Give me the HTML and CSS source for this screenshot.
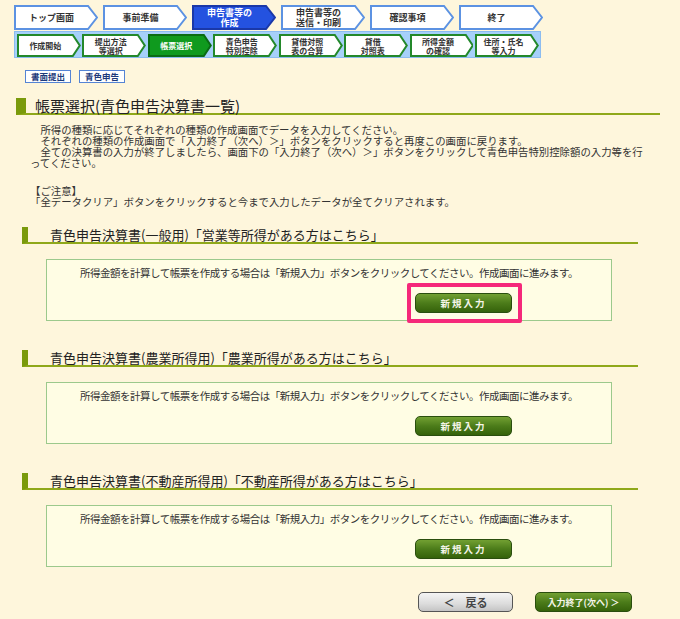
FILE: index.html
```html
<!DOCTYPE html>
<html lang="ja">
<head>
    <meta charset="UTF-8">
    <title>帳票選択(青色申告決算書一覧)</title>
    <link rel="stylesheet" href="styles.css">
</head>
<body>
    <div class="page">
        <!-- 大きいステップ -->
        <div class="steps-main">
            <div class="step">
                <svg class="step-bg" viewBox="0 0 84 25" preserveAspectRatio="none"><polygon points="1,1 74,1 83,12.5 74,24 1,24"/></svg>
                <span class="step-label">トップ画面</span>
            </div>
            <div class="step">
                <svg class="step-bg" viewBox="0 0 84 25" preserveAspectRatio="none"><polygon points="1,1 74,1 83,12.5 74,24 1,24"/></svg>
                <span class="step-label">事前準備</span>
            </div>
            <div class="step active">
                <svg class="step-bg" viewBox="0 0 84 25" preserveAspectRatio="none"><polygon points="1,1 74,1 83,12.5 74,24 1,24"/></svg>
                <span class="step-label">申告書等の<br>作成</span>
            </div>
            <div class="step">
                <svg class="step-bg" viewBox="0 0 84 25" preserveAspectRatio="none"><polygon points="1,1 74,1 83,12.5 74,24 1,24"/></svg>
                <span class="step-label">申告書等の<br>送信・印刷</span>
            </div>
            <div class="step">
                <svg class="step-bg" viewBox="0 0 84 25" preserveAspectRatio="none"><polygon points="1,1 74,1 83,12.5 74,24 1,24"/></svg>
                <span class="step-label">確認事項</span>
            </div>
            <div class="step">
                <svg class="step-bg" viewBox="0 0 84 25" preserveAspectRatio="none"><polygon points="1,1 74,1 83,12.5 74,24 1,24"/></svg>
                <span class="step-label">終了</span>
            </div>
        </div>

        <!-- 小さいステップ -->
        <div class="steps-sub">
            <div class="substep">
                <svg class="step-bg" viewBox="0 0 64 23" preserveAspectRatio="none"><polygon points="1,1 56,1 63,11.5 56,22 1,22"/></svg>
                <span class="step-label">作成開始</span>
            </div>
            <div class="substep">
                <svg class="step-bg" viewBox="0 0 64 23" preserveAspectRatio="none"><polygon points="1,1 56,1 63,11.5 56,22 1,22"/></svg>
                <span class="step-label">提出方法<br>等選択</span>
            </div>
            <div class="substep active">
                <svg class="step-bg" viewBox="0 0 64 23" preserveAspectRatio="none"><polygon points="1,1 56,1 63,11.5 56,22 1,22"/></svg>
                <span class="step-label">帳票選択</span>
            </div>
            <div class="substep">
                <svg class="step-bg" viewBox="0 0 64 23" preserveAspectRatio="none"><polygon points="1,1 56,1 63,11.5 56,22 1,22"/></svg>
                <span class="step-label">青色申告<br>特別控除</span>
            </div>
            <div class="substep">
                <svg class="step-bg" viewBox="0 0 64 23" preserveAspectRatio="none"><polygon points="1,1 56,1 63,11.5 56,22 1,22"/></svg>
                <span class="step-label">貸借対照<br>表の合算</span>
            </div>
            <div class="substep">
                <svg class="step-bg" viewBox="0 0 64 23" preserveAspectRatio="none"><polygon points="1,1 56,1 63,11.5 56,22 1,22"/></svg>
                <span class="step-label">貸借<br>対照表</span>
            </div>
            <div class="substep">
                <svg class="step-bg" viewBox="0 0 64 23" preserveAspectRatio="none"><polygon points="1,1 56,1 63,11.5 56,22 1,22"/></svg>
                <span class="step-label">所得金額<br>の確認</span>
            </div>
            <div class="substep">
                <svg class="step-bg" viewBox="0 0 64 23" preserveAspectRatio="none"><polygon points="1,1 56,1 63,11.5 56,22 1,22"/></svg>
                <span class="step-label">住所・氏名<br>等入力</span>
            </div>
        </div>

        <div class="tags">
            <span class="tag">書面提出</span>
            <span class="tag">青色申告</span>
        </div>

        <h1 class="title">帳票選択(青色申告決算書一覧)</h1>

        <p class="intro">
            　所得の種類に応じてそれぞれの種類の作成画面でデータを入力してください。<br>
            　それぞれの種類の作成画面で「入力終了（次へ）＞」ボタンをクリックすると再度この画面に戻ります。<br>
            　全ての決算書の入力が終了しましたら、画面下の「入力終了（次へ）＞」ボタンをクリックして青色申告特別控除額の入力等を行<br>
            ってください。
        </p>

        <p class="notice">
            【ご注意】<br>
            「全データクリア」ボタンをクリックすると今まで入力したデータが全てクリアされます。
        </p>

        <div class="form-sec">
            <h2 class="sec-title">青色申告決算書(一般用)「営業等所得がある方はこちら」</h2>
            <div class="sec-box">
                <p class="sec-text">所得金額を計算して帳票を作成する場合は「新規入力」ボタンをクリックしてください。作成画面に進みます。</p>
                <div class="sec-btn-row">
                    <span class="mark"><button class="btn-green btn-new">新規入力</button></span>
                </div>
            </div>
        </div>

        <div class="form-sec">
            <h2 class="sec-title">青色申告決算書(農業所得用)「農業所得がある方はこちら」</h2>
            <div class="sec-box">
                <p class="sec-text">所得金額を計算して帳票を作成する場合は「新規入力」ボタンをクリックしてください。作成画面に進みます。</p>
                <div class="sec-btn-row">
                    <button class="btn-green btn-new">新規入力</button>
                </div>
            </div>
        </div>

        <div class="form-sec">
            <h2 class="sec-title">青色申告決算書(不動産所得用)「不動産所得がある方はこちら」</h2>
            <div class="sec-box">
                <p class="sec-text">所得金額を計算して帳票を作成する場合は「新規入力」ボタンをクリックしてください。作成画面に進みます。</p>
                <div class="sec-btn-row">
                    <button class="btn-green btn-new">新規入力</button>
                </div>
            </div>
        </div>

        <div class="footer-btns">
            <button class="btn-back">＜　戻る</button>
            <button class="btn-green btn-next">入力終了(次へ) ＞</button>
        </div>
    </div>
</body>
</html>
```

FILE: styles.css
```css
body {
    margin: 0;
    background: #fef6dc;
    font-family: "Noto Sans CJK JP", "Noto Sans", sans-serif;
    color: #333;
}

.page {
    padding-top: 5px;
    height: 619px;
    box-sizing: border-box;
    overflow: hidden;
}

/* ステップ表示 */
.steps-main {
    display: flex;
    gap: 5px;
    margin-left: 14px;
    height: 25px;
}

.step,
.substep {
    position: relative;
    display: flex;
    align-items: center;
    justify-content: center;
    font-weight: bold;
    color: #333;
    text-align: center;
}

.step {
    width: 84px;
    height: 25px;
    padding-right: 9px;
    box-sizing: border-box;
    font-size: 9px;
    line-height: 10px;
}

.step-bg {
    position: absolute;
    left: 0;
    top: 0;
    width: 100%;
    height: 100%;
}

.step-bg polygon {
    vector-effect: non-scaling-stroke;
    stroke-width: 2;
    stroke-linejoin: miter;
}

.step .step-bg polygon {
    fill: #fff;
    stroke: #5c92e2;
}

.step.active .step-bg polygon {
    fill: #2452e0;
    stroke: #1a38a8;
}

.step-label {
    position: relative;
}

.step.active,
.substep.active {
    color: #fff;
}

.steps-sub {
    display: flex;
    gap: 1.7px;
    margin: 1px 0 0 14px;
    width: 527px;
    height: 27px;
    padding: 2px 1px 2px 2px;
    box-sizing: border-box;
    background: #a6d0fa;
    border: 1px solid #8cbcf0;
}

.substep {
    width: 64px;
    height: 23px;
    padding-right: 7px;
    box-sizing: border-box;
    font-size: 8px;
    line-height: 9px;
}

.substep .step-bg polygon {
    fill: #fff;
    stroke: #23882a;
}

.substep.active .step-bg polygon {
    fill: #0f9a1e;
    stroke: #0a6c14;
}

/* タグ */
.tags {
    display: flex;
    gap: 8px;
    margin: 12px 0 0 25px;
}

.tag {
    display: inline-block;
    width: 46px;
    height: 13px;
    box-sizing: border-box;
    border: 1px solid #5584d4;
    background: #fff;
    color: #1d3a7a;
    font-size: 8.5px;
    font-weight: bold;
    line-height: 11px;
    text-align: center;
}

/* 見出し */
.title {
    margin: 15px 0 0 16px;
    width: 625px;
    padding-left: 9px;
    border-left: 10px solid #7a9a0c;
    border-bottom: 2px solid #8fa81a;
    font-size: 15px;
    font-weight: normal;
    line-height: 15px;
    height: 15px;
    color: #222;
}

.intro {
    margin: 9px 0 0 30px;
    font-size: 10.4px;
    line-height: 11px;
    white-space: nowrap;
}

.notice {
    margin: 17px 0 0 30px;
    font-size: 10.4px;
    line-height: 11px;
}

.form-sec {
    margin-top: 29px;
}

.notice + .form-sec {
    margin-top: 20px;
}

.sec-title {
    margin: 0 0 0 22px;
    width: 588px;
    height: 15px;
    padding-left: 22px;
    border-left: 6px solid #7a9a0c;
    border-bottom: 2px solid #8fa81a;
    font-size: 13px;
    font-weight: normal;
    line-height: 15px;
    color: #222;
}

.sec-box {
    margin: 15px 0 0 46px;
    width: 566px;
    height: 62px;
    box-sizing: border-box;
    padding-top: 7px;
    border: 1px solid #9cc98c;
    background: #fffde4;
}

.sec-text {
    margin: 0;
    font-size: 10.5px;
    line-height: 12px;
    letter-spacing: -0.5px;
    text-align: center;
}

.sec-btn-row {
    display: flex;
    justify-content: flex-end;
    padding-right: 99px;
    margin-top: 14px;
}

/* ボタン */
.btn-green {
    width: 97px;
    height: 20px;
    padding: 0;
    border: 1px solid #2a4e0e;
    border-radius: 5px;
    background: linear-gradient(#72a032 0%, #4c7c1a 50%, #35620a 100%);
    color: #f6f6ea;
    font-family: inherit;
    font-size: 9.5px;
    font-weight: bold;
    letter-spacing: 2px;
    cursor: pointer;
}

.mark {
    position: relative;
    display: inline-block;
    line-height: 0;
}

.mark::after {
    content: "";
    position: absolute;
    left: -8px;
    right: -10px;
    top: -10px;
    bottom: -10px;
    border: 4px solid #f5287a;
    border-radius: 2px;
}

.footer-btns {
    display: flex;
    justify-content: flex-end;
    gap: 22px;
    padding-right: 48px;
    margin-top: 25px;
}

.btn-back {
    width: 95px;
    height: 20px;
    padding: 0;
    border: 1.5px solid #555;
    border-radius: 5px;
    background: linear-gradient(#f4f4f4 0%, #dcdcdc 60%, #c4c4c4 100%);
    color: #444;
    font-family: inherit;
    font-size: 11px;
    font-weight: bold;
    cursor: pointer;
}

.btn-next {
    width: 97px;
    font-size: 9px;
    letter-spacing: 0;
}
```
